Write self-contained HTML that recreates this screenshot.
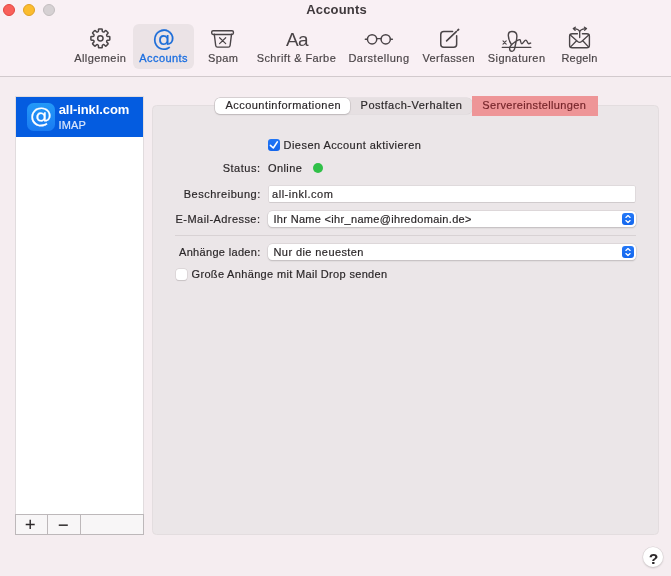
<!DOCTYPE html>
<html lang="de">
<head>
<meta charset="utf-8">
<title>Accounts</title>
<style>
html,body{margin:0;padding:0;}
body{width:671px;height:576px;overflow:hidden;background:#f5edf0;font-family:"Liberation Sans",sans-serif;color:#2b2729;position:relative;}
.abs{position:absolute;}
.t{position:absolute;white-space:nowrap;line-height:1;-webkit-text-stroke:0.18px currentColor;}
.tl{position:absolute;border-radius:50%;width:12px;height:12px;top:4px;box-sizing:border-box;}
#tbline{left:0;top:76px;width:671px;height:1px;background:#d2cacd;}
#selbg{left:133.3px;top:24px;width:60.7px;height:45.2px;border-radius:6px;background:#ebe3e6;}
svg{position:absolute;overflow:visible;}
.ic{fill:none;stroke:#4a4447;stroke-width:1.5;stroke-linecap:round;stroke-linejoin:round;}
#side{left:15px;top:96px;width:129px;height:439px;box-sizing:border-box;border:1px solid #e1dcde;background:#fff;}
#row{left:16px;top:97px;width:127px;height:39.7px;background:#045ce0;}
#acicon{left:27px;top:103px;width:28px;height:28px;border-radius:6.5px;background:linear-gradient(#2399f8,#1a7bf2);}
#sidebar-bottom{left:15px;top:514px;width:129px;height:21px;box-sizing:border-box;border:1px solid #bdb8ba;background:#f8f6f7;}
.vdiv{top:515px;width:1px;height:19px;background:#bdb8ba;}
#panel{left:152px;top:105px;width:507px;height:429.5px;box-sizing:border-box;border:1px solid #e3dddf;border-radius:4.5px;background:#ebe6e8;}
#seg{left:214.5px;top:97.5px;width:257.5px;height:16.5px;border-radius:5px;background:#e6e0e2;box-shadow:0 0 0 0.5px #dcd6d8;}
#segsel{left:214.5px;top:97.5px;width:135.5px;height:16.5px;border-radius:5px;background:#fff;box-shadow:0 0 0 0.5px #c4bec0,0 1px 1.5px rgba(0,0,0,.18);}
#hl{left:472px;top:96.1px;width:125.8px;height:19.7px;background:#ee9597;}
.f{font-size:11px;color:#2b2729;}
.r{transform:translateX(-100%);}
.inp{left:268px;width:367.5px;box-sizing:border-box;background:#fff;}
#in1{left:268.5px;width:366.6px;top:186px;height:16px;border-radius:1px;box-shadow:0 0 0 0.5px #d3cdcf,0 0.5px 0.5px rgba(0,0,0,.25);}
.sel{height:16px;border-radius:4.5px;box-shadow:0 0 0 0.5px #cfc9cb,0 1px 1.5px rgba(0,0,0,.22);}
.step{left:622px;width:12px;height:12px;border-radius:3px;background:linear-gradient(#2478f7,#1467ee);}
.sep{left:175px;width:461px;height:1px;top:235px;background:#d8d2d4;}
.cb{width:12px;height:12px;border-radius:3px;box-sizing:border-box;}
#help{left:643px;top:546.5px;width:20px;height:20px;border-radius:50%;background:#fff;box-shadow:0 0 0 0.5px #d8d2d4,0 1px 2px rgba(0,0,0,.22);}
</style>
</head>
<body>
<div id="root" style="position:absolute;left:0;top:0;width:671px;height:576px;will-change:transform;">
<div class="abs" style="left:0;top:0;width:671px;height:76px;background:#f9f0f4;"></div>
<!-- traffic lights -->
<div class="tl" style="left:3px;background:#f9605a;border:0.5px solid #e2453f;"></div>
<div class="tl" style="left:23px;background:#fbbc2e;border:0.5px solid #e0a123;"></div>
<div class="tl" style="left:43px;background:#d6d1d3;border:0.5px solid #c3bec0;"></div>

<!-- toolbar -->
<div class="abs" id="selbg"></div>
<div class="t" id="atb" style="left:152.6px;top:26.6px;font-size:22.5px;color:#1c6dd8;font-family:'DejaVu Sans',sans-serif;-webkit-text-stroke:0.15px #1c6dd8;">@</div>
<svg width="671" height="76" viewBox="0 0 671 76" style="left:0;top:0;">
<g class="ic">
<!-- gear -->
<path d="M97.85 31.88 Q98.54 31.59 98.51 30.84 L98.46 29.64 Q98.43 28.89 99.18 28.89 L101.52 28.89 Q102.27 28.89 102.24 29.64 L102.19 30.84 Q102.16 31.59 102.85 31.88 L103.16 32.00 Q103.85 32.29 104.36 31.74 L105.17 30.85 Q105.68 30.30 106.21 30.83 L107.87 32.49 Q108.40 33.02 107.85 33.53 L106.96 34.34 Q106.41 34.85 106.70 35.54 L106.82 35.85 Q107.11 36.54 107.86 36.51 L109.06 36.46 Q109.81 36.43 109.81 37.18 L109.81 39.52 Q109.81 40.27 109.06 40.24 L107.86 40.19 Q107.11 40.16 106.82 40.85 L106.70 41.16 Q106.41 41.85 106.96 42.36 L107.85 43.17 Q108.40 43.68 107.87 44.21 L106.21 45.87 Q105.68 46.40 105.17 45.85 L104.36 44.96 Q103.85 44.41 103.16 44.70 L102.85 44.82 Q102.16 45.11 102.19 45.86 L102.24 47.06 Q102.27 47.81 101.52 47.81 L99.18 47.81 Q98.43 47.81 98.46 47.06 L98.51 45.86 Q98.54 45.11 97.85 44.82 L97.54 44.70 Q96.85 44.41 96.34 44.96 L95.53 45.85 Q95.02 46.40 94.49 45.87 L92.83 44.21 Q92.30 43.68 92.85 43.17 L93.74 42.36 Q94.29 41.85 94.00 41.16 L93.88 40.85 Q93.59 40.16 92.84 40.19 L91.64 40.24 Q90.89 40.27 90.89 39.52 L90.89 37.18 Q90.89 36.43 91.64 36.46 L92.84 36.51 Q93.59 36.54 93.88 35.85 L94.00 35.54 Q94.29 34.85 93.74 34.34 L92.85 33.53 Q92.30 33.02 92.83 32.49 L94.49 30.83 Q95.02 30.30 95.53 30.85 L96.34 31.74 Q96.85 32.29 97.54 32.00 Z" stroke-width="1.5"/>
<circle cx="100.35" cy="38.35" r="2.7" stroke-width="1.5"/>
<!-- spam -->
<rect x="211.7" y="30.7" width="21.7" height="3.8" rx="1.4" stroke-width="1.4"/>
<path d="M214.3 34.3 L215.7 45.5 Q215.9 47.1 217.5 47.1 L228.3 47.1 Q229.9 47.1 230.1 45.5 L231.5 34.3" stroke-width="1.4"/>
<path d="M219.6 37.7 L225.7 43.6 M225.7 37.7 L219.6 43.6" stroke-width="1.2"/>
<!-- glasses -->
<circle cx="372.1" cy="39.3" r="4.65" stroke-width="1.5"/>
<circle cx="385.7" cy="39.3" r="4.65" stroke-width="1.5"/>
<path d="M376.8 38.6 L381 38.6 M365.3 39.2 L367.3 39.2 M390.4 39.2 L392.4 39.2" stroke-width="1.4"/>
<!-- compose -->
<path d="M452.6 31.55 L443.75 31.55 Q440.75 31.55 440.75 34.55 L440.75 44.35 Q440.75 47.35 443.75 47.35 L453.65 47.35 Q456.65 47.35 456.65 44.35 L456.65 35.8" stroke-width="1.5"/>
<path d="M446.6 40.9 L456.3 31.6" stroke-width="1.6"/>
<path d="M457.6 30.4 L458.6 29.5" stroke-width="1.7"/>
<!-- signature -->
<path d="M502.3 47.4 L530.8 47.4" stroke-width="1.3"/>
<path d="M503 40.9 L506.2 44.1 M506.2 40.9 L503 44.1" stroke-width="1.1"/>
<path d="M511.6 44.9 C509.7 42 508.3 38.6 508.3 35.6 C508.3 32.9 509.7 31.5 511.9 31.5 C514.9 31.5 516.9 33.2 516.9 36.1 C516.9 38.6 516.4 41 515.7 43.7 C515 46.5 514.9 47.5 514.5 49 C514 50.6 513.2 51.4 512.1 51.4 C510.6 51.4 509.6 50.2 509.6 48.5 C509.6 47.2 510.2 46.2 510.9 45.5 C511.8 44.5 512.6 43.7 513.6 43 C515 42 516.2 41 517.5 40.4 C518.6 39.8 519.3 39.4 519.9 39.7 C520.8 40.2 520.6 43.7 521.8 43.7 C523 43.7 524.3 40.1 525.8 40.1 C527.2 40.1 527.2 43.7 528.7 43.7 C529.5 43.7 530 43.4 530.6 43.1" stroke-width="1.4"/>
<!-- rules -->
<path d="M577.4 33.7 L572.2 33.7 Q569.6 33.7 569.6 36.3 L569.6 45.2 Q569.6 47.8 572.2 47.8 L586.8 47.8 Q589.4 47.8 589.4 45.2 L589.4 36.3 Q589.4 33.7 586.8 33.7 L582.4 33.7" stroke-width="1.4"/>
<path d="M570.3 35 L577.6 41.6 Q579.6 43.2 581.6 41.6 L588.8 35 M570.6 46.9 L576.3 41 M588.5 46.9 L583 41" stroke-width="1.3"/>
<path d="M579.7 37.6 L579.7 32.2 C579.7 30 577 29 574.2 28.6 M579.7 32.2 C579.7 30 582.4 29 585.6 28.6" stroke-width="1.3"/>
<path d="M575.3 27.2 L573.3 28.6 L575.1 30.2 M584.4 27.2 L586.5 28.6 L584.6 30.2" stroke-width="1.3"/>
</g>
</svg>
<div class="abs" id="tbline"></div>

<!-- sidebar -->
<div class="abs" id="side"></div>
<div class="abs" id="row"></div>
<div class="abs" id="acicon"></div>
<div id="x13" class="t" style="left:30px;top:104.6px;font-size:22px;color:#fff;font-family:'DejaVu Sans',sans-serif;-webkit-text-stroke:0.2px #fff;">@</div>
<div class="abs" id="sidebar-bottom"></div>
<div class="abs vdiv" style="left:47px;"></div>
<div class="abs vdiv" style="left:80px;"></div>
<div id="x16" class="t" style="left:25px;top:516px;font-size:18px;color:#2b2729;">+</div>
<div id="x17" class="t" style="left:58px;top:516px;font-size:18px;color:#2b2729;">−</div>

<!-- panel -->
<div class="abs" id="panel"></div>
<div class="abs" id="seg"></div>
<div class="abs" id="segsel"></div>
<div class="abs" id="hl"></div>

<div class="abs cb" style="left:268px;top:139px;background:linear-gradient(#2277f6,#1466ec);"></div>
<svg width="12" height="12" viewBox="0 0 12 12" style="left:268px;top:139px;"><path d="M2.4 6.4 L5.3 9 L9.3 2.9" fill="none" stroke="#fff" stroke-width="1.6" stroke-linecap="round" stroke-linejoin="round"/></svg>

<div class="abs" style="left:313px;top:163px;width:10px;height:10px;border-radius:50%;background:#30c048;"></div>

<div class="abs inp" id="in1"></div>

<div class="abs inp sel" style="top:211px;"></div>
<div class="abs step" style="top:213px;"></div>
<svg width="12" height="12" viewBox="0 0 12 12" style="left:622px;top:213px;"><path d="M3.9 4.4 L6 2.6 L8.1 4.4 M3.9 7.6 L6 9.5 L8.1 7.6" fill="none" stroke="#fff" stroke-width="1.3" stroke-linecap="round" stroke-linejoin="round"/></svg>

<div class="abs sep"></div>

<div class="abs inp sel" style="top:244px;"></div>
<div class="abs step" style="top:246px;"></div>
<svg width="12" height="12" viewBox="0 0 12 12" style="left:622px;top:246px;"><path d="M3.9 4.4 L6 2.6 L8.1 4.4 M3.9 7.6 L6 9.5 L8.1 7.6" fill="none" stroke="#fff" stroke-width="1.3" stroke-linecap="round" stroke-linejoin="round"/></svg>

<div class="abs cb" style="left:175.5px;top:269.2px;width:11px;height:11px;background:#fff;box-shadow:0 0 0 0.5px #d2ccce,0 0.5px 0.8px rgba(0,0,0,.18);"></div>

<div class="t" id="title" style="left:306.15px;top:3.00px;font-size:13px;letter-spacing:0.200px;font-weight:bold;color:#3f393c;-webkit-text-stroke:0;">Accounts</div>
<div class="t" id="l1" style="left:74.20px;top:53.00px;font-size:11px;letter-spacing:0.425px;color:#4a4447;">Allgemein</div>
<div class="t" id="l2" style="left:139.30px;top:53.00px;font-size:11px;letter-spacing:0.429px;color:#1a6ee0;-webkit-text-stroke:0.3px #1a6ee0;">Accounts</div>
<div class="t" id="l3" style="left:208.10px;top:53.00px;font-size:11px;letter-spacing:0.367px;color:#4a4447;">Spam</div>
<div class="t" id="l4" style="left:256.70px;top:53.00px;font-size:11px;letter-spacing:0.407px;color:#4a4447;">Schrift &amp; Farbe</div>
<div class="t" id="l5" style="left:348.40px;top:53.00px;font-size:11px;letter-spacing:0.500px;color:#4a4447;">Darstellung</div>
<div class="t" id="l6" style="left:422.40px;top:53.00px;font-size:11px;letter-spacing:0.419px;color:#4a4447;">Verfassen</div>
<div class="t" id="l7" style="left:487.80px;top:53.00px;font-size:11px;letter-spacing:0.444px;color:#4a4447;">Signaturen</div>
<div class="t" id="l8" style="left:561.40px;top:53.00px;font-size:11px;letter-spacing:0.230px;color:#4a4447;">Regeln</div>
<div class="t" id="aa" style="left:285.90px;top:30.00px;font-size:19px;letter-spacing:-0.650px;color:#4a4447;-webkit-text-stroke:0;">Aa</div>
<div class="t" id="sn" style="left:58.70px;top:103.00px;font-size:13px;letter-spacing:-0.077px;font-weight:bold;color:#fff;-webkit-text-stroke:0;">all-inkl.com</div>
<div class="t" id="si" style="left:58.60px;top:120.00px;font-size:11px;letter-spacing:0.117px;color:#d9e6fb;">IMAP</div>
<div class="t" id="t1" style="left:225.40px;top:100.00px;font-size:11px;letter-spacing:0.466px;">Accountinformationen</div>
<div class="t" id="t2" style="left:360.60px;top:100.00px;font-size:11px;letter-spacing:0.491px;">Postfach-Verhalten</div>
<div class="t" id="t3" style="left:482.25px;top:100.00px;font-size:11px;letter-spacing:0.356px;color:#75252a;">Servereinstellungen</div>
<div class="t" id="c1" style="left:283.60px;top:140.00px;font-size:11px;letter-spacing:0.444px;">Diesen Account aktivieren</div>
<div class="t" id="s1" style="left:222.70px;top:163.00px;font-size:11px;letter-spacing:0.508px;">Status:</div>
<div class="t" id="s2" style="left:267.90px;top:163.00px;font-size:11px;letter-spacing:0.430px;">Online</div>
<div class="t" id="b1" style="left:183.70px;top:189.00px;font-size:11px;letter-spacing:0.521px;">Beschreibung:</div>
<div class="t" id="b2" style="left:272.00px;top:189.00px;font-size:11px;letter-spacing:0.532px;">all-inkl.com</div>
<div class="t" id="e1" style="left:175.60px;top:214.00px;font-size:11px;letter-spacing:0.439px;">E-Mail-Adresse:</div>
<div class="t" id="e2" style="left:273.50px;top:214.00px;font-size:11px;letter-spacing:0.314px;">Ihr Name &lt;ihr_name@ihredomain.de&gt;</div>
<div class="t" id="a1" style="left:179.00px;top:247.00px;font-size:11px;letter-spacing:0.323px;">Anhänge laden:</div>
<div class="t" id="a2" style="left:273.50px;top:247.00px;font-size:11px;letter-spacing:0.413px;">Nur die neuesten</div>
<div class="t" id="g1" style="left:191.50px;top:269.00px;font-size:11px;letter-spacing:0.333px;">Große Anhänge mit Mail Drop senden</div>
<div class="abs" id="help"></div>
<div id="x31" class="t" style="left:649px;top:550.5px;font-size:15px;font-weight:bold;color:#2b2729;">?</div>
</div>
</body>
</html>
